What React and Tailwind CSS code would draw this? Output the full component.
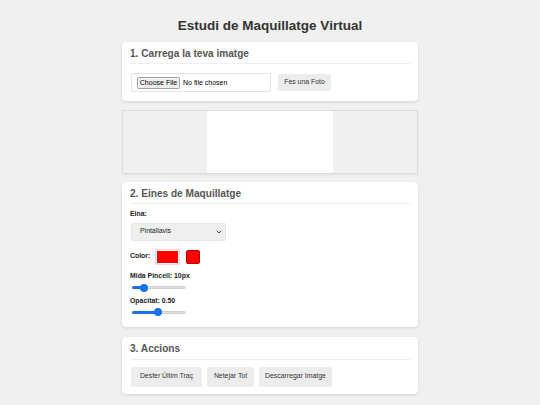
import React from "react";

function Slider({ pct }) {
  return (
    <div className="relative w-[54px] h-[8px] ml-[2px]">
      <div className="absolute left-0 right-0 top-[2.5px] h-[3px] rounded-full bg-[#e3e3e3] border border-[#d0d0d0]" />
      <div
        className="absolute left-0 top-[2.5px] h-[3px] rounded-full bg-[#1a73e8]"
        style={{ width: `${pct}%` }}
      />
      <div
        className="absolute top-0 w-[8px] h-[8px] rounded-full bg-[#1a73e8]"
        style={{ left: `calc(${pct}% - 4px)` }}
      />
    </div>
  );
}

function Card({ title, children, className = "" }) {
  return (
    <div className={`bg-white rounded-[4px] shadow-[0_1px_3px_rgba(0,0,0,0.12)] px-[8px] ${className}`}>
      <h2 className="text-[10.1px] leading-none font-bold text-[#555] pt-[7px] pb-[4px] border-b border-[#eeeeee]">
        {title}
      </h2>
      {children}
    </div>
  );
}

const label = "text-[6.9px] leading-none font-bold text-[#222]";
const btn =
  "h-[20px] bg-[#ececec] rounded-[2px] flex items-center justify-center text-[6.9px] text-[#333] leading-none";

export default function App() {
  return (
    <div className="min-h-screen bg-[#f0f0f0] font-['Liberation_Sans',Arial,sans-serif] text-[#333] pb-[12px]">
      <div className="w-[296px] mx-auto flex flex-col">
        <h1 className="text-[13.5px] leading-none font-bold text-center text-[#333] mt-[18.5px] mb-[10px]">
          Estudi de Maquillatge Virtual
        </h1>

        <Card title="1. Carrega la teva imatge" className="pb-[9px]">
          <div className="flex items-center gap-[7px] mt-[9px] ml-[1px]">
            <div className="w-[140px] h-[19px] border border-[#e3e3e3] rounded-[2px] flex items-center pl-[5px] gap-[3px]">
              <span className="w-[43px] h-[12px] flex items-center justify-center text-[7px] leading-none text-black bg-[#efefef] border border-[#a3a3a3] rounded-[1.5px]">
                Choose File
              </span>
              <span className="text-[7px] leading-none text-black">No file chosen</span>
            </div>
            <div className={`${btn} !h-[17px] w-[53px]`}>Fes una Foto</div>
          </div>
        </Card>

        <div className="mt-[9px] h-[64px] bg-[#f0f0f0] border border-[#dcdcdc] shadow-[0_1px_2px_rgba(0,0,0,0.06)] flex justify-center">
          <div className="w-[126px] h-full bg-white" />
        </div>

        <Card title="2. Eines de Maquillatge" className="mt-[8px] pb-[11px]">
          <div className={`${label} mt-[7px]`}>Eina:</div>
          <div className="mt-[4.5px] ml-[1px] w-[95px] h-[18px] bg-[#efefef] border border-[#e6e6e6] rounded-[2px] flex items-center justify-between pl-[8px] pr-[3px]">
            <span className="text-[6.9px] leading-none text-[#222]">Pintallavis</span>
            <svg width="6" height="4" viewBox="0 0 6 4" className="mt-[1px]">
              <path d="M0.8 0.8 L3 3 L5.2 0.8" fill="none" stroke="#444" strokeWidth="1" />
            </svg>
          </div>
          <div className="flex items-center mt-[8px] h-[16px]">
            <span className={label}>Color:</span>
            <div className="ml-[5px] w-[25px] h-[16px] border border-[#f1d4d4] bg-white rounded-[1px] flex items-center justify-center">
              <div className="w-[21px] h-[12px] bg-[#ff0000]" />
            </div>
            <div className="ml-[6px] w-[14px] h-[14px] bg-[#ff0000] border border-[#b00000] rounded-[2px]" />
          </div>
          <div className={`${label} mt-[8px]`}>Mida Pincell: 10px</div>
          <div className="mt-[4px]">
            <Slider pct={22} />
          </div>
          <div className={`${label} mt-[6px]`}>Opacitat: 0.50</div>
          <div className="mt-[4px]">
            <Slider pct={48} />
          </div>
        </Card>

        <Card title="3. Accions" className="mt-[10px] pb-[7px]">
          <div className="flex gap-[5px] mt-[7px] ml-[1px]">
            <div className={`${btn} w-[71px]`}>Desfer Últim Traç</div>
            <div className={`${btn} w-[47px]`}>Netejar Tot</div>
            <div className={`${btn} w-[73px]`}>Descarregar Imatge</div>
          </div>
        </Card>
      </div>
    </div>
  );
}
